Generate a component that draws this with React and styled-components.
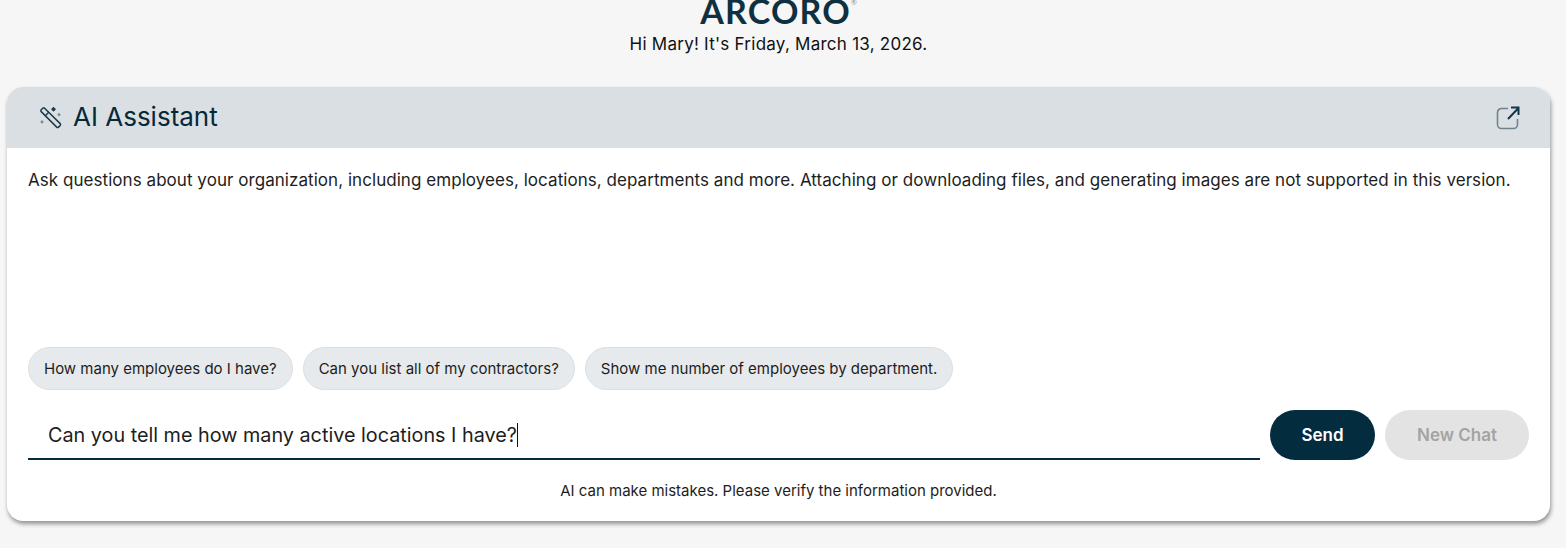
import styled, { createGlobalStyle } from 'styled-components';

const chips = [
	'How many employees do I have?',
	'Can you list all of my contractors?',
	'Show me number of employees by department.',
];

function App() {
	return (
		<>
			<GlobalStyle />
			<Page>
				<Top>
					<Logo>
						ARCORO<sup>®</sup>
					</Logo>
					<Greeting>Hi Mary! It's Friday, March 13, 2026.</Greeting>
				</Top>
				<Card>
					<CardHeader>
						<TitleWrap>
							<svg width="24" height="24" viewBox="0 0 24 24" fill="none">
								<path
									d="M2.2 3.8 3.8 2.2a1.3 1.3 0 0 1 1.8 0l15.6 15.4a1.3 1.3 0 0 1 0 1.8l-1.7 1.7a1.3 1.3 0 0 1-1.8 0L2.2 5.6a1.3 1.3 0 0 1 0-1.8Z"
									stroke="#1f3a48"
									strokeWidth="1.5"
								/>
								<path d="M6 10l4-4" stroke="#1f3a48" strokeWidth="1.5" />
								<path d="M14.5 0.8 17 3.3l-2.5 2.5L12 3.3Z" fill="#1f3a48" />
								<path d="M20 6.8l1.9 1.9L20 10.6l-1.9-1.9Z" fill="#7d8e98" />
								<path d="M3 14l1.9 1.9L3 17.8l-1.9-1.9Z" fill="#7d8e98" />
							</svg>
							<Title>AI Assistant</Title>
						</TitleWrap>
						<svg width="26" height="26" viewBox="0 0 26 26" fill="none">
							<path
								d="M13 3.5H6.5a4 4 0 0 0-4 4v12a4 4 0 0 0 4 4h12a4 4 0 0 0 4-4V14"
								stroke="#6f838d"
								strokeWidth="1.6"
							/>
							<path d="M13 14 23 3.5M16 2.5h7.5V10" stroke="#12384a" strokeWidth="2" />
						</svg>
					</CardHeader>
					<CardBody>
						<Intro>
							Ask questions about your organization, including employees, locations, departments and
							more. Attaching or downloading files, and generating images are not supported in this
							version.
						</Intro>
						<Chips>
							{chips.map((chip) => (
								<Chip key={chip}>{chip}</Chip>
							))}
						</Chips>
						<InputRow>
							<InputBox>
								<Typed>Can you tell me how many active locations I have?</Typed>
								<Caret />
							</InputBox>
							<PillButton $primary>Send</PillButton>
							<PillButton>New Chat</PillButton>
						</InputRow>
						<Disclaimer>AI can make mistakes. Please verify the information provided.</Disclaimer>
					</CardBody>
				</Card>
			</Page>
		</>
	);
}

const GlobalStyle = createGlobalStyle`
	html, body {
		margin: 0;
		background: #f6f6f6;
		font-family: Inter, "Liberation Sans", sans-serif;
		color: #1a1a1a;
	}
`;

const Page = styled.div`
	height: 548px;
	padding: 0 16px 0 7px;
	box-sizing: border-box;
	overflow: hidden;
`;

const Top = styled.div`
	display: flex;
	flex-direction: column;
	align-items: center;
	height: 87px;
`;

const Logo = styled.div`
	font-family: Lato, sans-serif;
	font-size: 34px;
	line-height: 22px;
	height: 22px;
	letter-spacing: 1.2px;
	font-weight: 700;
	color: #0f3040;

	sup {
		font-size: 7px;
		font-weight: 400;
		vertical-align: 19px;
		line-height: 0;
		letter-spacing: 0;
		color: #7d8e98;
	}
`;

const Greeting = styled.div`
	margin-top: 12px;
	font-size: 17px;
	line-height: 20px;
	letter-spacing: 0.25px;
	color: #111;
`;

const Card = styled.section`
	height: 434px;
	background: #fff;
	border-radius: 16px;
	box-shadow: 1px 3px 4px rgba(0, 0, 0, 0.4);
	display: flex;
	flex-direction: column;
	overflow: hidden;
`;

const CardHeader = styled.header`
	height: 61px;
	flex: none;
	background: #dadfe3;
	display: flex;
	align-items: center;
	justify-content: space-between;
	padding: 0 29px 0 32px;
`;

const TitleWrap = styled.div`
	display: flex;
	align-items: center;
	gap: 10px;
`;

const Title = styled.h1`
	margin: -1px 0 0;
	font-size: 26px;
	font-weight: 400;
	line-height: 30px;
	color: #06293a;
`;

const CardBody = styled.div`
	flex: 1;
	display: flex;
	flex-direction: column;
	padding: 20px 21px 0 21px;
`;

const Intro = styled.p`
	margin: 0;
	height: 179px;
	font-size: 17px;
	line-height: 25px;
	letter-spacing: 0.05px;
	color: #1d1d1d;
`;

const Chips = styled.div`
	display: flex;
	gap: 10px;
`;

const Chip = styled.button`
	height: 43px;
	padding: 0 15px;
	border: 1px solid #dcdfe2;
	border-radius: 22px;
	background: #e7eaec;
	font-family: inherit;
	font-size: 15px;
	color: #1d1d1d;
`;

const InputRow = styled.div`
	margin-top: 20px;
	display: flex;
	gap: 10px;
`;

const InputBox = styled.div`
	flex: 1;
	height: 50px;
	box-sizing: border-box;
	border-bottom: 2px solid #042c3f;
	padding: 1px 0 0 20px;
	display: flex;
	align-items: center;
	font-size: 19.8px;
	color: #1d1d1d;
`;

const Typed = styled.span`
	line-height: 48px;
`;

const Caret = styled.span`
	width: 1px;
	height: 24px;
	background: #111;
`;

const PillButton = styled.button`
	height: 50px;
	width: ${(p) => (p.$primary ? '105px' : '144px')};
	border: none;
	border-radius: 25px;
	font-family: inherit;
	font-size: 17px;
	font-weight: 600;
	background: ${(p) => (p.$primary ? '#042c3f' : '#e3e3e3')};
	color: ${(p) => (p.$primary ? '#fff' : '#a3a3a3')};
`;

const Disclaimer = styled.div`
	margin-top: 22px;
	text-align: center;
	font-size: 15px;
	line-height: 18px;
	color: #1d1d1d;
`;

export default App;
